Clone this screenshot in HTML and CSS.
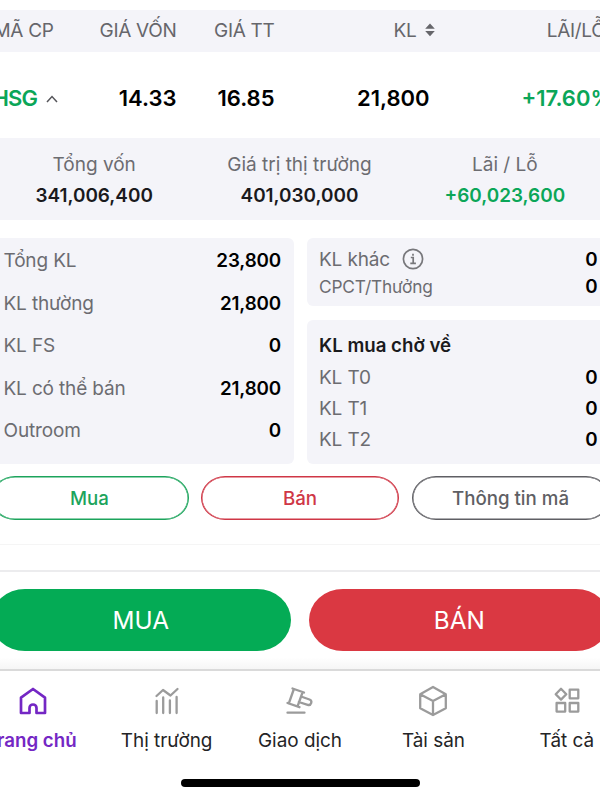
FILE: index.html
```
<!DOCTYPE html>
<html lang="vi">
<head>
    <meta charset="UTF-8">
    <title>Danh mục</title>
    <link rel="stylesheet" href="styles.css">
</head>
<body>
    <div class="app">
        <div class="table-row table-head">
            <span class="code">MÃ CP</span>
            <span>GIÁ VỐN</span>
            <span>GIÁ TT</span>
            <span>KL
                <svg class="sort-icon" width="10" height="14" viewBox="0 0 10 14" fill="#66666b"><path d="M5 .5 9.8 5.8H.2zM5 13.2.2 7.900h9.600z"/></svg>
            </span>
            <span class="profit">LÃI/LỖ</span>
        </div>

        <div class="table-row stock">
            <span class="code green">HSG
                <svg class="caret" width="12" height="8" viewBox="0 0 12 8" fill="none" stroke="#55555a" stroke-width="1.5"><path d="M1 7 6 1.5 11 7"/></svg>
            </span>
            <span>14.33</span>
            <span>16.85</span>
            <span class="volume">21,800</span>
            <span class="percent green">+17.60%</span>
        </div>

        <div class="summary">
            <div><p>Tổng vốn</p><b>341,006,400</b></div>
            <div><p>Giá trị thị trường</p><b>401,030,000</b></div>
            <div><p>Lãi / Lỗ</p><b class="green">+60,023,600</b></div>
        </div>

        <div class="cards">
            <div class="card card-total">
                <div class="line"><span>Tổng KL</span><b>23,800</b></div>
                <div class="line"><span>KL thường</span><b>21,800</b></div>
                <div class="line"><span>KL FS</span><b>0</b></div>
                <div class="line"><span>KL có thể bán</span><b>21,800</b></div>
                <div class="line"><span>Outroom</span><b>0</b></div>
            </div>
            <div class="side">
                <div class="card card-other">
                    <div class="line">
                        <span class="with-icon">KL khác
                            <svg width="22" height="22" viewBox="0 0 22 22" fill="none" stroke="#77777b" stroke-width="1.7"><circle cx="11" cy="11" r="9.6"/><path d="M8.8 9.5h2.4v5.6M8.3 15.3h5.6M11 5.7v2"/></svg>
                        </span>
                        <b>0</b>
                    </div>
                    <div class="line"><span class="small">CPCT/Thưởng</span><b>0</b></div>
                </div>
                <div class="card card-pending">
                    <h3>KL mua chờ về</h3>
                    <div class="line"><span>KL T0</span><b>0</b></div>
                    <div class="line"><span>KL T1</span><b>0</b></div>
                    <div class="line"><span>KL T2</span><b>0</b></div>
                </div>
            </div>
        </div>

        <div class="actions">
            <button class="outline-btn buy">Mua</button>
            <button class="outline-btn sell">Bán</button>
            <button class="outline-btn info">Thông tin mã</button>
        </div>

        <div class="order-bar">
            <button class="order-btn order-buy">MUA</button>
            <button class="order-btn order-sell">BÁN</button>
        </div>

        <nav class="tabs">
            <a class="tab active">
                <svg width="32" height="32" viewBox="0 0 32 32"><path d="M4 12.7 16 4l12 8.7V28h-8.500v-5a3.500 3.500 0 0 0-7 0v5H4z"/></svg>
                <span>Trang chủ</span>
            </a>
            <a class="tab">
                <svg width="32" height="32" viewBox="0 0 32 32"><path d="M5.500 11 12 5l7.500 5.500L26.500 4M5.700 16v12M12.200 12.500v15.500M18.900 15.500V28M25.600 12v16"/></svg>
                <span>Thị trường</span>
            </a>
            <a class="tab">
                <svg width="32" height="32" viewBox="0 0 32 32"><path d="M8.500 3.500 20 7.500M9.700 4.500 4.800 18.500M3.500 18l12 4.200M18.500 7.500 13.700 21M17 11.500l8.500 3a2.800 2.800 0 0 1-1.800 5.300L14.800 17M3.500 27.700h17"/></svg>
                <span>Giao dịch</span>
            </a>
            <a class="tab">
                <svg width="32" height="32" viewBox="0 0 32 32"><path d="m16 2 12.800 7.200v14L16 30 3.200 23.200v-14zM3.200 9.200 16 16l12.800-6.800M16 16v14"/></svg>
                <span>Tài sản</span>
            </a>
            <a class="tab">
                <svg width="32" height="32" viewBox="0 0 32 32"><path d="m10 3.800 5.300 5.400L10 14.600 4.700 9.200zM18.700 4.700h8.600v8.600h-8.600zM5.600 18h8.600v8.600H5.600zM18.700 18h8.600v8.600h-8.600z"/></svg>
                <span>Tất cả</span>
            </a>
        </nav>
        <div class="home-indicator"></div>
    </div>
</body>
</html>
```

FILE: styles.css
```
* {
    box-sizing: border-box;
}
body {
    margin: 0;
    height: 800px;
    overflow: hidden;
    background: #fff;
    font-family: Inter, "Liberation Sans", sans-serif;
    color: #000;
}
/* phone layout is a little wider than the viewport, centered */
.app {
    width: 667px;
    margin-left: -33.5px;
    padding-top: 10px;
}
p, h3 {
    margin: 0;
}
b, h3 {
    font-weight: 600;
}
.green {
    color: #0ba658;
}
.table-row {
    display: grid;
    grid-template-columns: 84px 99px 98px 160px 181px;
    padding-left: 27px;
    align-items: center;
    text-align: right;
    white-space: nowrap;
}
.table-row .code {
    text-align: left;
}
.table-head {
    height: 42px;
    padding-bottom: 1px;
    background: #f4f4f9;
    color: #66666b;
    font-size: 19px;
    letter-spacing: -0.3px;
}
.sort-icon {
    margin-left: 3px;
}
.profit {
    padding-right: 10px;
}
.stock {
    height: 86px;
    padding-top: 6px;
    font-size: 22px;
    font-weight: 600;
}
.stock .code {
    margin-left: -1px;
    letter-spacing: -0.9px;
}
.caret {
    margin: 0 0 3px 4px;
}
.volume {
    padding-right: 5px;
}
.percent {
    padding-right: 3px;
}
.summary {
    display: grid;
    grid-template-columns: repeat(3, 1fr);
    height: 82px;
    padding: 11px 26px 0 25px;
    background: #f4f4f9;
    text-align: center;
}
.summary p {
    font-size: 19px;
    line-height: 31px;
    color: #6c6c71;
}
.summary b {
    display: block;
    font-size: 18.9px;
    line-height: 31px;
    color: #1a1a1d;
}
.summary .green {
    color: #0ba658;
}
.cards {
    display: flex;
    gap: 13px;
    height: 226px;
    margin: 18px 24px 0;
}
.card {
    background: #f4f4f9;
    border-radius: 6px;
}
.line {
    display: flex;
    justify-content: space-between;
    align-items: center;
    font-size: 19px;
    letter-spacing: -0.15px;
    color: #6c6c71;
}
.line b {
    font-size: 18.8px;
    color: #000;
}
.card-total {
    width: 303.5px;
    padding: 1.5px 13px 0;
}
.card-total .line {
    height: 42.5px;
}
.side {
    display: flex;
    flex: 1;
    flex-direction: column;
    gap: 14px;
}
.card-other {
    height: 68px;
    padding: 7.5px 12px 0 12px;
}
.card-other .line {
    height: 27.5px;
}
.with-icon {
    display: flex;
    align-items: center;
    gap: 12px;
}
.small {
    font-size: 17.3px;
}
.card-pending {
    flex: 1;
    padding: 9.5px 12px 0 12px;
}
.card-pending h3 {
    font-size: 18.7px;
    line-height: 32px;
    color: #1a1a1d;
}
.card-pending .line {
    height: 31px;
}
.actions {
    display: flex;
    gap: 12.5px;
    height: 81px;
    padding: 12px 24px 0;
    border-bottom: 1px solid #f5f5f5;
}
.outline-btn {
    flex: 1 1 0;
    height: 44px;
    padding: 0;
    border: 1px solid;
    border-radius: 24px / 22px;
    background: #fff;
    box-shadow: inset 0 0 0 0.5px;
    font: 500 18.7px Inter, sans-serif;
}
.buy {
    color: #1ca45c;
}
.sell {
    color: #cf3746;
}
.info {
    color: #5f5f64;
}
.order-bar {
    display: flex;
    gap: 18px;
    height: 99px;
    margin-top: 25px;
    padding: 17px 24px 0;
    border-top: 2px solid #ececee;
    background: linear-gradient(#fff 88%, #f6f6f6);
}
.order-btn {
    flex: 1;
    height: 62px;
    padding: 0;
    border: none;
    border-radius: 34px / 31px;
    color: #fff;
    font: 400 24.3px Inter, sans-serif;
}
.order-buy {
    background: #04ab55;
}
.order-sell {
    background: #da3842;
}
.tabs {
    display: flex;
    height: 110px;
    border-top: 2px solid #dadada;
    background: #fff;
}
.tab {
    display: flex;
    flex: 1 1 0;
    flex-direction: column;
    align-items: center;
    padding-top: 14px;
    font-size: 18.9px;
    line-height: 24px;
    color: #242426;
    white-space: nowrap;
}
.tab span {
    margin-top: 12px;
}
.tab svg {
    fill: none;
    stroke: #9b9b9b;
    stroke-width: 2.3;
    stroke-linejoin: round;
    stroke-linecap: round;
}
.tab.active {
    color: #7427c4;
    font-size: 18.7px;
    font-weight: 600;
}
.tab.active span {
    margin-left: -4px;
}
.tab.active svg {
    stroke: #7427c4;
    stroke-width: 2.7;
}
.home-indicator {
    width: 239px;
    height: 8px;
    margin: 0 auto;
    border-radius: 4px;
    background: #000;
}
```
